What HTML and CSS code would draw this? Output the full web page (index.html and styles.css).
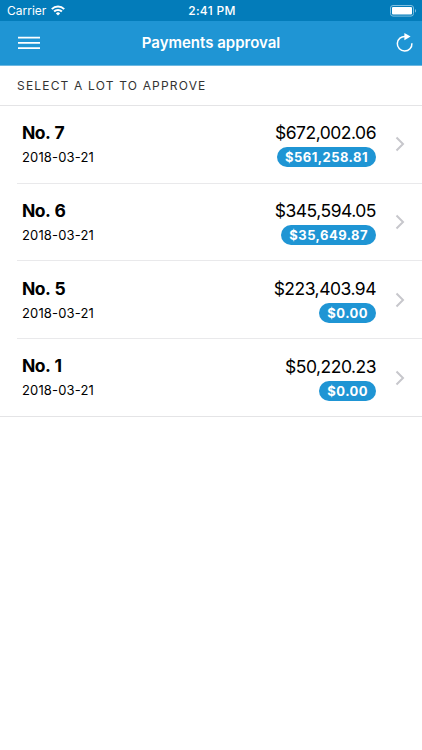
FILE: index.html
```html
<!DOCTYPE html>
<html lang="en">
<head>
  <meta charset="UTF-8" />
  <meta name="viewport" content="width=device-width, initial-scale=1" />
  <title>Payments approval</title>
  <link rel="stylesheet" href="styles.css">
</head>
<body>
  <div class="status-bar">
    <div class="carrier">
      <span>Carrier</span>
      <svg width="14" height="11" viewBox="0 0 14 11" fill="none" stroke="#fff" stroke-width="2">
        <path d="M0.8 4.1a8.8 8.8 0 0 1 12.4 0" />
        <path d="M3.1 6.5a5.5 5.5 0 0 1 7.8 0" />
        <path d="M7 10.6L4.9 8.4a3 3 0 0 1 4.2 0z" fill="#fff" stroke="none" />
      </svg>
    </div>
    <div class="time">2:41 PM</div>
    <div class="battery">
      <svg width="27" height="12" viewBox="0 0 27 12">
        <rect x="0.5" y="0.5" width="23" height="10.6" rx="2.5" fill="none" stroke="#7fbfe0" />
        <rect x="2" y="2" width="20" height="7.6" rx="1" fill="#fff" />
        <path d="M25 4v3.6c1.4-.5 1.4-3.1 0-3.6z" fill="#7fbfe0" />
      </svg>
    </div>
  </div>

  <header class="navbar">
    <button class="nav-button" aria-label="Menu">
      <svg width="22" height="14" viewBox="0 0 22 14" stroke="#fff" stroke-width="1.8">
        <path d="M0 1.6h22M0 6.900h22M0 12.2h22" />
      </svg>
    </button>
    <h1>Payments approval</h1>
    <button class="nav-button" aria-label="Refresh">
      <svg width="18" height="20" viewBox="0 0 18 20">
        <path d="M9.500 3.500A7.300 7.300 0 1 0 15.900 10.200" fill="none" stroke="#fff" stroke-width="1.5" />
        <path d="M8.400 0L14.600 3.500L8.400 7.200z" fill="#fff" />
      </svg>
    </button>
  </header>

  <h2 class="list-header">Select a lot to approve</h2>

  <ul class="lots">
    <li class="lot">
      <div class="lot-inner">
        <div class="lot-info">
          <div class="lot-name">No. 7</div>
          <div class="lot-date">2018-03-21</div>
        </div>
        <div class="lot-amounts">
          <div class="total">$672,002.06</div>
          <div class="badge">$561,258.81</div>
        </div>
        <svg class="chevron" width="10" height="16" viewBox="0 0 10 16"><path d="M1.5 1.5L8 8l-6.500 6.500" /></svg>
      </div>
    </li>
    <li class="lot">
      <div class="lot-inner">
        <div class="lot-info">
          <div class="lot-name">No. 6</div>
          <div class="lot-date">2018-03-21</div>
        </div>
        <div class="lot-amounts">
          <div class="total">$345,594.05</div>
          <div class="badge">$35,649.87</div>
        </div>
        <svg class="chevron" width="10" height="16" viewBox="0 0 10 16"><path d="M1.5 1.5L8 8l-6.500 6.500" /></svg>
      </div>
    </li>
    <li class="lot">
      <div class="lot-inner">
        <div class="lot-info">
          <div class="lot-name">No. 5</div>
          <div class="lot-date">2018-03-21</div>
        </div>
        <div class="lot-amounts">
          <div class="total">$223,403.94</div>
          <div class="badge">$0.00</div>
        </div>
        <svg class="chevron" width="10" height="16" viewBox="0 0 10 16"><path d="M1.5 1.5L8 8l-6.500 6.500" /></svg>
      </div>
    </li>
    <li class="lot">
      <div class="lot-inner">
        <div class="lot-info">
          <div class="lot-name">No. 1</div>
          <div class="lot-date">2018-03-21</div>
        </div>
        <div class="lot-amounts">
          <div class="total">$50,220.23</div>
          <div class="badge">$0.00</div>
        </div>
        <svg class="chevron" width="10" height="16" viewBox="0 0 10 16"><path d="M1.5 1.5L8 8l-6.500 6.500" /></svg>
      </div>
    </li>
  </ul>
</body>
</html>
```

FILE: styles.css
```css
* {
  box-sizing: border-box;
}

body {
  margin: 0;
  font-family: Inter, "Liberation Sans", sans-serif;
  background: #fff;
  color: #000;
}

.status-bar {
  display: grid;
  grid-template-columns: 1fr auto 1fr;
  align-items: center;
  height: 21px;
  padding: 0 5px 0 7px;
  background: #037cba;
  color: #fff;
  font-size: 12px;
}

.carrier {
  display: flex;
  align-items: center;
  gap: 5px;
}

.time {
  font-weight: 500;
  letter-spacing: 0.3px;
}

.battery {
  display: flex;
  justify-content: flex-end;
}

.navbar {
  display: grid;
  grid-template-columns: 1fr auto 1fr;
  align-items: center;
  height: 45px;
  padding: 0 8px 0 18px;
  background: #1f95d4;
  border-bottom: 1px solid #6db8e1;
  color: #fff;
}

.navbar h1 {
  margin: 0 10px 2px 0;
  font-size: 15px;
  font-weight: 600;
}

.nav-button {
  display: flex;
  padding: 0;
  border: none;
  background: none;
  cursor: pointer;
}

.nav-button:last-child {
  justify-self: end;
}

.list-header {
  height: 40px;
  margin: 0;
  padding-left: 17px;
  border-bottom: 1px solid #e4e4e6;
  color: #333;
  font-size: 12px;
  font-weight: 400;
  line-height: 39px;
  letter-spacing: 1.18px;
  text-transform: uppercase;
}

.lots {
  margin: 0;
  padding: 0;
  list-style: none;
  border-bottom: 1px solid #e4e4e6;
}

.lot {
  padding-left: 17px;
}

.lot-inner {
  display: flex;
  align-items: center;
  height: 77.7px;
  padding: 0 17px 0 5px;
  border-bottom: 1px solid #e9e9eb;
}

.lot:last-child .lot-inner {
  height: 77px;
  border-bottom: none;
}

.lot-info {
  flex: 1;
  padding-top: 1.6px;
}

.lot-name {
  font-size: 17.5px;
  font-weight: 700;
  line-height: 24px;
  letter-spacing: -0.5px;
  word-spacing: 1px;
}

.lot-date {
  font-size: 13px;
  line-height: 24px;
  letter-spacing: 0.15px;
}

.lot-amounts {
  display: flex;
  flex-direction: column;
  align-items: flex-end;
  margin-right: 19px;
  padding-bottom: 2px;
}

.total {
  font-size: 17.5px;
  line-height: 28px;
  letter-spacing: -0.5px;
}

.badge {
  height: 20px;
  padding: 0 8px;
  border-radius: 10px;
  background: #1f95d4;
  color: #fff;
  font-size: 13px;
  font-weight: 700;
  line-height: 20px;
  letter-spacing: 0.45px;
}

.chevron {
  fill: none;
  stroke: #c7c7cc;
  stroke-width: 2;
}
```
